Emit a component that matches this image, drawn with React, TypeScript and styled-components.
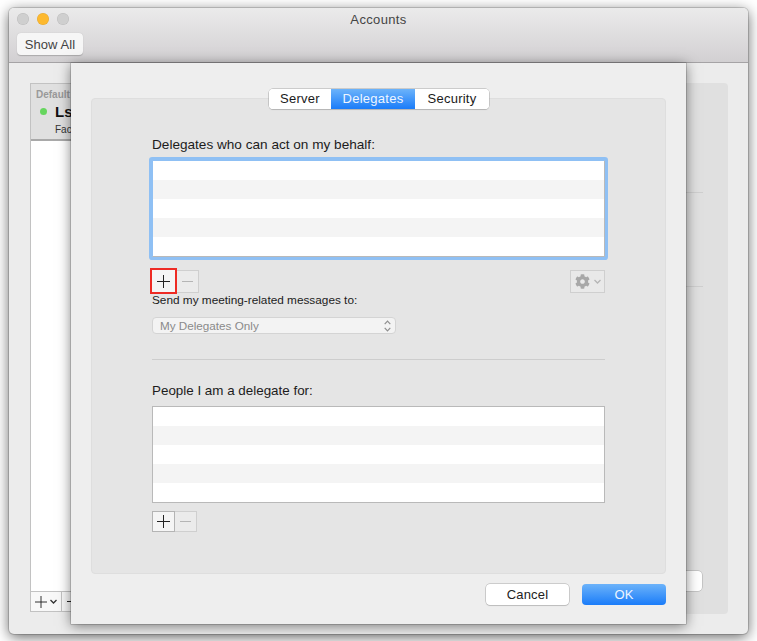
import React from 'react';
import styled, { createGlobalStyle } from 'styled-components';
import { FaCog } from 'react-icons/fa';

const GlobalStyle = createGlobalStyle`
  html, body {
    margin: 0;
    height: 100%;
    background: #ffffff;
    overflow: hidden;
    font-family: "Liberation Sans", Arial, sans-serif;
  }
`;

const PlusIcon = ({ size = 13 }: { size?: number }) => (
  <svg width={size} height={size} viewBox="0 0 13 13">
    <path d="M6.5 0V13M0 6.5H13" stroke="#222" strokeWidth="1" fill="none" />
  </svg>
);

const MinusIcon = ({ color = '#b5b5b5', size = 11 }: { color?: string; size?: number }) => (
  <svg width={size} height="3" viewBox={`0 0 ${size} 3`}>
    <path d={`M0 1.5H${size}`} stroke={color} strokeWidth="1" fill="none" />
  </svg>
);

const ChevronDown = ({ color, width = 7 }: { color: string; width?: number }) => (
  <svg width={width} height="5" viewBox="0 0 7 5">
    <path d="M0.5 1L3.5 4L6.5 1" stroke={color} strokeWidth="1.3" fill="none" />
  </svg>
);

const Stepper = () => (
  <svg width="7" height="12" viewBox="0 0 7 12">
    <path d="M0.7 4.2L3.5 1.2L6.3 4.2M0.7 7.8L3.5 10.8L6.3 7.8" stroke="#8f8f8f" strokeWidth="1.2" fill="none" />
  </svg>
);

const RowList = ({ count }: { count: number }) => (
  <>
    {Array.from({ length: count }).map((_, i) => (
      <Row key={i} $odd={i % 2 === 1} />
    ))}
  </>
);

const App = () => (
  <>
    <GlobalStyle />
    <Page>
      <Window>
        <TitleBar>
          <Lights>
            <Light $color="#cfcfcf" />
            <Light $color="#fdb92f" />
            <Light $color="#cfcfcf" />
          </Lights>
          <Title>Accounts</Title>
          <ShowAll>Show All</ShowAll>
        </TitleBar>
        <Body>
          <Sidebar>
            <SideHeader>
              <DefaultLabel>Default</DefaultLabel>
              <AccountRow>
                <StatusDot />
                <AccountName>Ls</AccountName>
              </AccountRow>
              <AccountType>Fac</AccountType>
            </SideHeader>
            <SideList />
            <SideFooter>
              <SideAdd>
                <PlusIcon size={12} />
                <ChevronDown color="#333" />
              </SideAdd>
              <SideRemove>
                <MinusIcon color="#222" size={12} />
              </SideRemove>
            </SideFooter>
          </Sidebar>
          <DetailPane>
            <DetailRule $top={109} />
            <DetailRule $top={203} />
            <DetailButton />
          </DetailPane>
        </Body>
        <Sheet>
          <Group>
            <Tabs>
              <Tab $width={62}>Server</Tab>
              <Tab $width={84} $active>Delegates</Tab>
              <Tab $width={74}>Security</Tab>
            </Tabs>
            <Content>
              <Label>Delegates who can act on my behalf:</Label>
              <FocusList>
                <RowList count={5} />
              </FocusList>
              <ToolRow>
                <AddRemove>
                  <HighlightedAdd>
                    <PlusIcon />
                  </HighlightedAdd>
                  <RemoveButton $height={23}>
                    <MinusIcon />
                  </RemoveButton>
                </AddRemove>
                <GearButton>
                  <FaCog size={15} color="#a8a8a8" />
                  <ChevronDown color="#b5b5b5" />
                </GearButton>
              </ToolRow>
              <SmallLabel>Send my meeting-related messages to:</SmallLabel>
              <Select>
                <SelectText>My Delegates Only</SelectText>
                <Stepper />
              </Select>
              <Divider />
              <PeopleLabel>People I am a delegate for:</PeopleLabel>
              <PlainList>
                <RowList count={5} />
              </PlainList>
              <LowerButtons>
                <AddButton>
                  <PlusIcon />
                </AddButton>
                <RemoveButton $height={21}>
                  <MinusIcon />
                </RemoveButton>
              </LowerButtons>
            </Content>
          </Group>
          <Footer>
            <CancelButton>Cancel</CancelButton>
            <OkButton>OK</OkButton>
          </Footer>
        </Sheet>
      </Window>
    </Page>
  </>
);

const Page = styled.div`
  width: 757px;
  height: 641px;
  padding: 8px 9px 7px 9px;
  box-sizing: border-box;
`;
const Window = styled.div`
  position: relative;
  width: 739px;
  height: 626px;
  border-radius: 5px;
  background: #ececec;
  box-shadow: 0 3px 14px rgba(0, 0, 0, 0.6), 0 0 0 1px rgba(0, 0, 0, 0.15);
  display: flex;
  flex-direction: column;
`;
const TitleBar = styled.div`
  position: relative;
  height: 55px;
  box-sizing: border-box;
  padding: 25px 8px 0;
  border-bottom: 1px solid #a5a3a5;
  border-radius: 5px 5px 0 0;
  background: linear-gradient(#ebebeb, #d2d0d2);
`;
const Lights = styled.div`
  position: absolute;
  top: 5px;
  left: 8px;
  display: flex;
  gap: 8px;
`;
const Light = styled.div<{ $color: string }>`
  width: 12px;
  height: 12px;
  border-radius: 50%;
  background: ${({ $color }) => $color};
  box-shadow: inset 0 0 0 0.5px rgba(0, 0, 0, 0.1);
`;
const Title = styled.div`
  position: absolute;
  top: 4px;
  left: 0;
  right: 0;
  text-align: center;
  font-size: 13px;
  line-height: 15px;
  letter-spacing: 0.35px;
  color: #444;
`;
const ShowAll = styled.button`
  width: 66px;
  height: 22px;
  padding: 0;
  border: none;
  border-radius: 4px;
  background: #f6f6f6;
  box-shadow: 0 0.5px 1px rgba(0, 0, 0, 0.2);
  font: 13px "Liberation Sans", Arial, sans-serif;
  letter-spacing: 0.1px;
  color: #444;
`;
const Body = styled.div`
  flex: 1;
  display: flex;
  padding: 20px 20px 22px 21px;
`;
const Sidebar = styled.div`
  width: 130px;
  display: flex;
  flex-direction: column;
  border: 1px solid #c2c2c2;
  border-right: none;
  background: #fff;
`;
const SideHeader = styled.div`
  height: 57px;
  box-sizing: border-box;
  padding: 5px 5px 0;
  background: #e0e0e0;
  border-bottom: 2px solid #a9a9a9;
`;
const DefaultLabel = styled.div`
  font-size: 10px;
  font-weight: bold;
  line-height: 12px;
  color: #999;
`;
const AccountRow = styled.div`
  display: flex;
  align-items: center;
  gap: 8px;
  margin-top: 2px;
  padding-left: 4px;
`;
const StatusDot = styled.div`
  width: 7px;
  height: 7px;
  border-radius: 50%;
  background: #66d65e;
`;
const AccountName = styled.div`
  font-size: 15px;
  font-weight: bold;
  line-height: 17px;
  color: #111;
`;
const AccountType = styled.div`
  margin: 4px 0 0 19px;
  font-size: 10px;
  line-height: 12px;
  color: #333;
`;
const SideList = styled.div`
  flex: 1;
`;
const SideFooter = styled.div`
  height: 19px;
  display: flex;
  border-top: 1px solid #c2c2c2;
  background: #f8f8f8;
`;
const SideAdd = styled.div`
  width: 30px;
  display: flex;
  align-items: center;
  justify-content: center;
  gap: 3px;
  border-right: 1px solid #c2c2c2;
`;
const SideRemove = styled.div`
  width: 22px;
  display: flex;
  align-items: center;
  justify-content: center;
`;
const DetailPane = styled.div`
  position: relative;
  flex: 1;
  margin-bottom: -2px;
  background: #e0e0e0;
  border-radius: 4px;
`;
const DetailRule = styled.div<{ $top: number }>`
  position: absolute;
  top: ${({ $top }) => $top}px;
  right: 25px;
  width: 40px;
  height: 1px;
  background: #cfcfcf;
`;
const DetailButton = styled.div`
  position: absolute;
  right: 26px;
  bottom: 23px;
  width: 60px;
  height: 20px;
  border-radius: 4px;
  background: #fff;
  box-shadow: 0 0 0 0.5px #aaa;
`;
const Sheet = styled.div`
  position: absolute;
  top: 55px;
  left: 62px;
  width: 615px;
  height: 561px;
  box-sizing: border-box;
  padding: 35px 20px 0;
  background: #eeeeee;
  box-shadow: 0 2px 12px rgba(0, 0, 0, 0.5), 0 0 0 0.5px rgba(0, 0, 0, 0.3);
`;
const Group = styled.div`
  position: relative;
  height: 476px;
  box-sizing: border-box;
  border: 1px solid #dedede;
  border-radius: 4px;
  background: #e5e5e5;
`;
const Tabs = styled.div`
  position: absolute;
  top: -10px;
  left: 177px;
  display: flex;
  height: 20px;
  border-radius: 4px;
  overflow: hidden;
  background: #fff;
  box-shadow: 0 0 0 0.5px #a8a8a8, 0 1px 1px rgba(0, 0, 0, 0.15);
`;
const Tab = styled.div<{ $width: number; $active?: boolean }>`
  width: ${({ $width }) => $width}px;
  text-align: center;
  font-size: 13px;
  line-height: 20px;
  letter-spacing: 0.25px;
  color: ${({ $active }) => ($active ? '#eef5ff' : '#1a1a1a')};
  background: ${({ $active }) => ($active ? 'linear-gradient(#6cb3fa, #1a7cf9)' : '#fff')};
`;
const Content = styled.div`
  display: flex;
  flex-direction: column;
  padding: 38px 60px 0;
`;
const Label = styled.div`
  font-size: 13.6px;
  line-height: 15px;
  color: #1c1c1c;
`;
const PlainList = styled.div`
  margin-top: 8px;
  height: 95px;
  border: 1px solid #b9b9b9;
  overflow: hidden;
  background: #fff;
`;
const FocusList = styled(PlainList)`
  border-top-color: #8fc0f4;
  border-left-color: #8fc0f4;
  box-shadow: 0 0 0 3px #8fc0f4;
  border-radius: 1px;
`;
const Row = styled.div<{ $odd: boolean }>`
  height: 19px;
  background: ${({ $odd }) => ($odd ? '#f4f4f4' : '#ffffff')};
`;
const ToolRow = styled.div`
  margin-top: 13px;
  display: flex;
  justify-content: space-between;
  align-items: flex-start;
`;
const AddRemove = styled.div`
  display: flex;
`;
const SquareButton = styled.div`
  box-sizing: border-box;
  display: flex;
  align-items: center;
  justify-content: center;
`;
const HighlightedAdd = styled(SquareButton)`
  width: 27px;
  height: 26px;
  margin: -2px 0 -1px -2px;
  border: 2px solid #ee2b24;
  background: #f5f5f5;
`;
const AddButton = styled(SquareButton)`
  width: 23px;
  height: 21px;
  border: 1px solid #b4b4b4;
  background: #f5f5f5;
`;
const RemoveButton = styled(SquareButton)<{ $height: number }>`
  width: 22px;
  height: ${({ $height }) => $height}px;
  border: 1px solid #cfcfcf;
  border-left: none;
  background: #ebebeb;
`;
const GearButton = styled.div`
  width: 35px;
  height: 23px;
  box-sizing: border-box;
  display: flex;
  align-items: center;
  justify-content: center;
  gap: 4px;
  border: 1px solid #cfcfcf;
  background: #e9e9e9;
`;
const SmallLabel = styled.div`
  margin-top: 1px;
  font-size: 11.8px;
  line-height: 13px;
  color: #1c1c1c;
`;
const Select = styled.div`
  margin-top: 10px;
  width: 244px;
  height: 17px;
  box-sizing: border-box;
  padding: 0 4px 0 7px;
  display: flex;
  align-items: center;
  justify-content: space-between;
  border: 1px solid #d4d4d4;
  border-radius: 4px;
  background: #f3f3f3;
`;
const SelectText = styled.span`
  margin-top: -1px;
  font-size: 11.7px;
  color: #8a8a8a;
`;
const Divider = styled.div`
  margin-top: 25px;
  height: 1px;
  background: #cdcdcd;
`;
const PeopleLabel = styled(Label)`
  margin-top: 23px;
  font-size: 13.4px;
`;
const LowerButtons = styled.div`
  margin-top: 8px;
  display: flex;
`;
const Footer = styled.div`
  margin-top: 10px;
  display: flex;
  justify-content: flex-end;
  gap: 13px;
`;
const CancelButton = styled.button`
  width: 83px;
  height: 21px;
  padding: 0;
  border: none;
  border-radius: 4px;
  background: #fff;
  box-shadow: 0 0 0 0.5px #aaa, 0 1px 1px rgba(0, 0, 0, 0.12);
  font: 13px "Liberation Sans", Arial, sans-serif;
  letter-spacing: 0.2px;
  color: #222;
`;
const OkButton = styled.button`
  width: 84px;
  height: 21px;
  padding: 0;
  border: none;
  border-radius: 4px;
  background: linear-gradient(#6cb3fa, #1a7cf9);
  font: 13px "Liberation Sans", Arial, sans-serif;
  letter-spacing: 0.2px;
  color: #eef5ff;
`;

export default App;
